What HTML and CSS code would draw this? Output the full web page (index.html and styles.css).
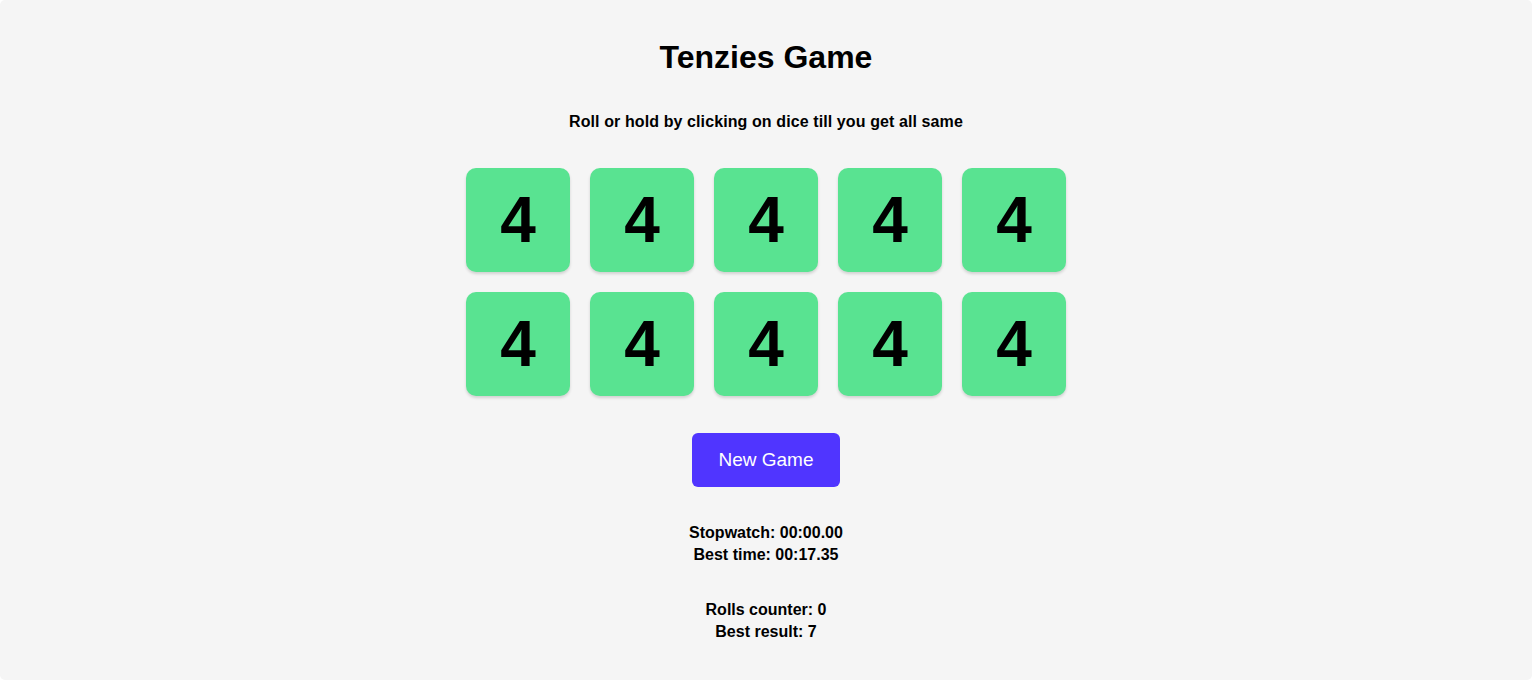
FILE: index.html
```html
<!DOCTYPE html>
<html lang="en">
<head>
<meta charset="utf-8">
<title>Tenzies Game</title>
<link rel="stylesheet" href="styles.css">
</head>
<body>
<main class="game">
  <h1 class="title">Tenzies Game</h1>
  <p class="instructions">Roll or hold by clicking on dice till you get all same</p>
  <div class="dice">
    <div class="die">4</div>
    <div class="die">4</div>
    <div class="die">4</div>
    <div class="die">4</div>
    <div class="die">4</div>
    <div class="die">4</div>
    <div class="die">4</div>
    <div class="die">4</div>
    <div class="die">4</div>
    <div class="die">4</div>
  </div>
  <button class="roll-btn">New Game</button>
  <div class="stats">
    <p>Stopwatch: 00:00.00</p>
    <p>Best time: 00:17.35</p>
  </div>
  <div class="stats">
    <p>Rolls counter: 0</p>
    <p>Best result: 7</p>
  </div>
</main>
</body>
</html>
```
FILE: styles.css
```css
* { box-sizing: border-box; }
html, body { margin: 0; padding: 0; background: #ffffff; }
body {
  font-family: "Liberation Sans", Arial, sans-serif;
  color: #000;
}
.game {
  height: 680px;
  background: #f5f5f5;
  border-radius: 5px;
  display: flex;
  flex-direction: column;
  align-items: center;
  padding-top: 39px;
}
.title {
  margin: 0;
  font-size: 32px;
  line-height: 37px;
  font-weight: 700;
}
.instructions {
  margin: 37px 0 0;
  font-size: 16px;
  line-height: 18px;
  font-weight: 700;
  letter-spacing: 0.1px;
}
.dice {
  margin-top: 37px;
  display: grid;
  grid-template-columns: repeat(5, 104px);
  grid-auto-rows: 104px;
  gap: 20px;
}
.die {
  background: #59e391;
  border-radius: 10px;
  box-shadow: 0 2px 3px rgba(0, 0, 0, 0.15);
  display: flex;
  align-items: center;
  justify-content: center;
  font-size: 64px;
  font-weight: 700;
}
.roll-btn {
  margin-top: 37px;
  width: 148px;
  height: 54px;
  border: none;
  border-radius: 6px;
  background: #5035ff;
  color: #fff;
  font-family: "Liberation Sans", Arial, sans-serif;
  font-size: 19px;
}
.stats {
  margin-top: 35px;
  text-align: center;
  font-weight: 700;
  font-size: 16px;
  line-height: 22px;
}
.stats p { margin: 0; }
.stats + .stats { margin-top: 33px; }
```
